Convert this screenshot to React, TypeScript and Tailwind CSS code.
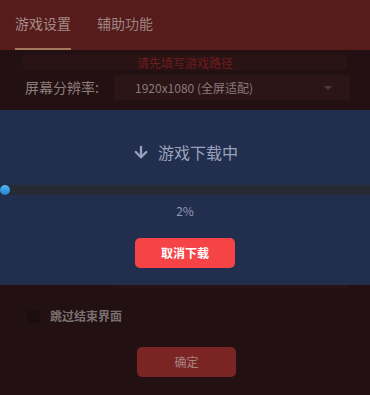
import { ArrowDown } from 'lucide-react'

const font = { fontFamily: '"Noto Sans CJK SC", "Noto Sans", sans-serif' }

export default function App() {
  return (
    <div className="w-[370px] h-[395px] bg-[#221012] overflow-hidden flex flex-col" style={font}>
      {/* tabs */}
      <div className="h-[50px] bg-[#561b1b] flex items-end px-[15px] gap-[26px] shrink-0">
        <div className="h-full flex flex-col justify-end">
          <div className="text-[14px] leading-none text-[#a58c88] pb-[18px]">游戏设置</div>
          <div className="h-[2px] bg-[#a5785c] w-[56px]" />
        </div>
        <div className="h-full flex flex-col justify-end">
          <div className="text-[14px] leading-none text-[#9b8582] pb-[20px]">辅助功能</div>
        </div>
      </div>

      <div className="px-[23px] pt-[5px] shrink-0">
        <div className="h-[15px] bg-[#2a1315] rounded-[3px] flex items-center justify-center text-[12px] leading-none text-[#6e1c1c]">
          请先填写游戏路径
        </div>
      </div>

      <div className="flex items-center pl-[25px] pr-[20px] pt-[5px] shrink-0">
        <div className="w-[89px] text-[14px] text-[#8d7d7a]">屏幕分辨率:</div>
        <div className="flex-1 h-[25px] bg-[#2c1517] rounded-[3px] flex items-center pl-[21px] pr-[18px] text-[12px] text-[#8a7a77]">
          <span className="flex-1">1920x1080 (全屏适配)</span>
          <span className="w-0 h-0 border-l-[4px] border-r-[4px] border-t-[4px] border-l-transparent border-r-transparent border-t-[#4e3a3a]" />
        </div>
      </div>

      {/* download overlay */}
      <div className="mt-[10px] h-[175px] bg-[#222e4e] flex flex-col items-center shrink-0">
        <div className="mt-[33px] h-[18px] flex items-center gap-[8px] text-[16px] leading-none text-[#9aa3bd]">
          <ArrowDown size={18} strokeWidth={3} />
          <span>游戏下载中</span>
        </div>
        <div className="mt-[24px] w-full h-[10px] bg-[#262a33] relative">
          <div className="absolute left-0 top-0 w-[10px] h-[10px] rounded-full bg-gradient-to-b from-[#49b8f0] to-[#2b7fd6]" />
        </div>
        <div className="mt-[10px] text-[12px] leading-[12px] text-[#8f99b3]">2%</div>
        <button className="mt-[21px] w-[100px] h-[30px] rounded-[5px] bg-[#f54346] text-white text-[12px] font-bold">
          取消下载
        </button>
      </div>

      <div className="ml-[113px] mr-[20px] h-[3px] bg-[#2a1316] rounded-b-[3px] shrink-0" />

      <div className="flex items-center pl-[27px] mt-[19px] gap-[10px] shrink-0">
        <div className="w-[13px] h-[13px] bg-[#1c0d0e] rounded-[2px]" />
        <span className="text-[12px] font-bold text-[#7a6f6f]">跳过结束界面</span>
      </div>

      <div className="flex justify-center mt-[22px] pl-[3px] shrink-0">
        <button className="w-[99px] h-[30px] rounded-[5px] bg-[#7b2424] text-[#a88584] text-[12px]">确定</button>
      </div>
    </div>
  )
}
